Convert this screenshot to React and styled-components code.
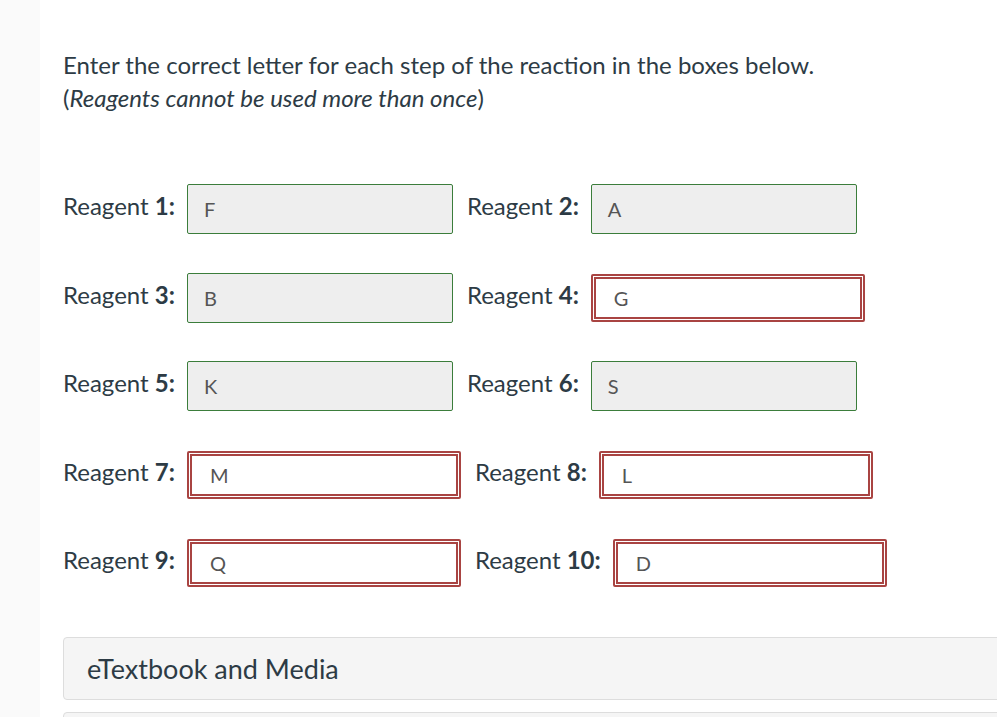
import React from "react";
import styled, { createGlobalStyle } from "styled-components";

const GlobalStyle = createGlobalStyle`
  html, body {
    margin: 0;
    padding: 0;
    background: #ffffff;
    overflow: hidden;
  }
  body {
    font-family: Lato, "Open Sans", sans-serif;
    color: #2d3b45;
  }
`;

const reagents = [
  [
    { n: 1, value: "F", ok: true },
    { n: 2, value: "A", ok: true },
  ],
  [
    { n: 3, value: "B", ok: true },
    { n: 4, value: "G", ok: false },
  ],
  [
    { n: 5, value: "K", ok: true },
    { n: 6, value: "S", ok: true },
  ],
  [
    { n: 7, value: "M", ok: false },
    { n: 8, value: "L", ok: false },
  ],
  [
    { n: 9, value: "Q", ok: false },
    { n: 10, value: "D", ok: false },
  ],
];

const App = () => {
  return (
    <>
      <GlobalStyle />
      <Page>
        <Sidebar />
        <Main>
          <Prompt>
            Enter the correct letter for each step of the reaction in the boxes
            below.
            <br />
            (<em>Reagents cannot be used more than once</em>)
          </Prompt>
          <Grid>
            {reagents.map((row, i) => (
              <Row key={i}>
                {row.map((r) => (
                  <Cell key={r.n}>
                    <Label>
                      Reagent <b>{r.n}:</b>
                    </Label>
                    <Answer $ok={r.ok}>{r.value}</Answer>
                  </Cell>
                ))}
              </Row>
            ))}
          </Grid>
          <Panels>
            <Panel>eTextbook and Media</Panel>
            <Panel />
          </Panels>
        </Main>
      </Page>
    </>
  );
};

const Page = styled.div`
  display: flex;
  height: 717px;
  overflow: hidden;
`;

const Sidebar = styled.div`
  width: 40px;
  flex-shrink: 0;
  background: #fafafa;
`;

const Main = styled.div`
  flex: 1;
  padding: 48px 0 0 23px;
  min-width: 0;
  overflow: hidden;
`;

const Prompt = styled.p`
  margin: 0;
  font-size: 24px;
  line-height: 33px;
  color: #2d3b45;
  em {
    font-style: italic;
  }
`;

const Grid = styled.div`
  display: flex;
  flex-direction: column;
  gap: 38.5px;
  margin-top: 70px;
`;

const Row = styled.div`
  display: flex;
  align-items: center;
  height: 50px;
`;

const Cell = styled.div`
  display: flex;
  align-items: center;
  margin-right: 14px;
`;

const Label = styled.span`
  font-size: 24px;
  color: #2d3b45;
  margin-right: 12px;
  padding-bottom: 7px;
  white-space: nowrap;
  b {
    font-weight: 700;
  }
`;

const Answer = styled.div`
  box-sizing: border-box;
  display: flex;
  align-items: center;
  width: ${(p) => (p.$ok ? "266px" : "274px")};
  height: ${(p) => (p.$ok ? "50px" : "48px")};
  padding-left: ${(p) => (p.$ok ? "16px" : "18px")};
  background: ${(p) => (p.$ok ? "#eeeeee" : "#ffffff")};
  border: ${(p) => (p.$ok ? "1px solid #3b7d3b" : "5px double #a94442")};
  border-radius: 2px;
  font-size: 20px;
  color: #555555;
`;

const Panels = styled.div`
  display: flex;
  flex-direction: column;
  gap: 12px;
  margin-top: 49px;
`;

const Panel = styled.div`
  box-sizing: border-box;
  width: 1100px;
  height: 63px;
  flex-shrink: 0;
  display: flex;
  align-items: center;
  padding-left: 23px;
  background: #f5f5f5;
  border: 1px solid #dddddd;
  border-radius: 4px;
  font-size: 27px;
  color: #2d3b45;
`;

export default App;
